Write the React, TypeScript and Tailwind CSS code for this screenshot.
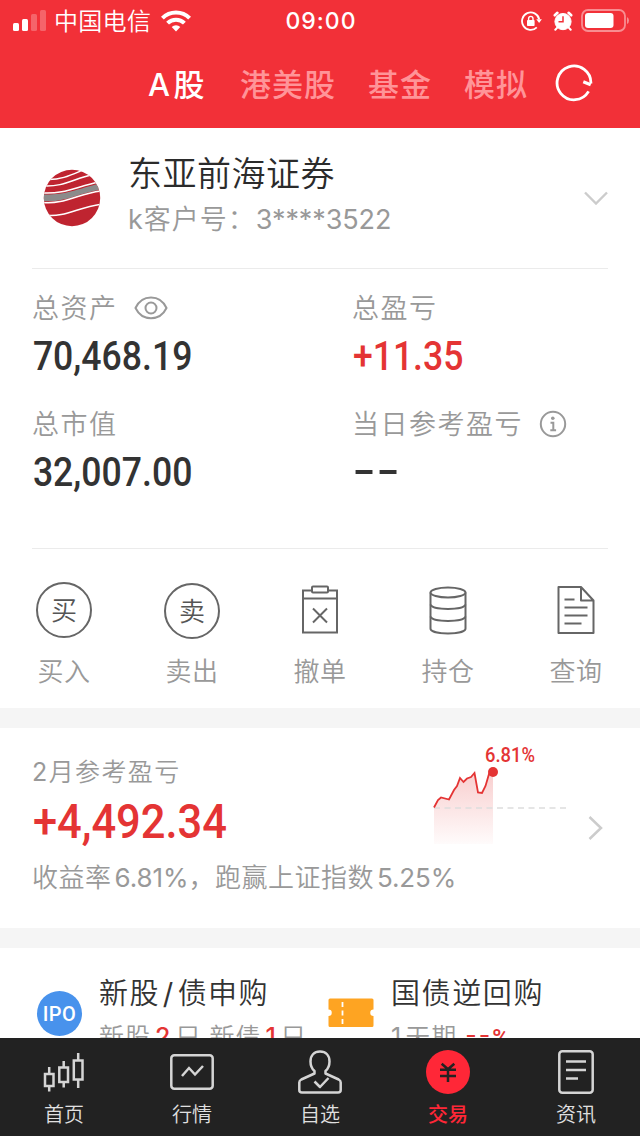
import React from 'react';

const tabs = ['A股', '港美股', '基金', '模拟'];

const StatusBar: React.FC = () => (
  <div className="grid h-10 grid-cols-[1fr_auto_1fr] items-center pl-[13px] pr-[11px]">
    <div className="flex items-center">
      <svg width="33" height="22" viewBox="0 0 33 22" fill="#fff">
        <rect x="0" y="13" width="6" height="8" rx="1.5" />
        <rect x="9" y="9" width="6" height="12" rx="1.5" />
        <rect x="18" y="4" width="6" height="17" rx="1.5" opacity=".25" />
        <rect x="27" y="0" width="6" height="21" rx="1.5" opacity=".25" />
      </svg>
      <span className="ml-2 pt-[2px] text-[24px] font-[350] leading-[38px] tracking-[0.3px]">中国电信</span>
      <svg className="ml-[10px]" width="30" height="22" viewBox="0 0 30 22" fill="none" stroke="#fff" strokeWidth="4">
        <path d="M1.4 8.2a19.2 19.2 0 0 1 27.2 0" />
        <path d="M6.6 13.2a11.9 11.9 0 0 1 16.8 0" />
        <path d="M15 21.5l-4.3-4.4a6.1 6.1 0 0 1 8.6 0z" fill="#fff" stroke="none" />
      </svg>
    </div>
    <span className="text-[23px] font-medium leading-[42px] tracking-[1px]">09:00</span>
    <div className="flex items-center justify-end">
      <svg width="21" height="20" viewBox="0 0 21 20" fill="none" stroke="#fff" strokeWidth="1.8">
        <path d="M18.2 8.2A8.7 8.7 0 1 0 15.8 16.4" />
        <path d="M15.3 8.2h5.6l-2.8 3.7z" fill="#fff" stroke="none" />
        <rect x="6" y="9" width="7.6" height="6" rx=".8" fill="#fff" stroke="none" />
        <path d="M7.6 9.5V7.6a2.2 2.2 0 0 1 4.4 0v1.9" strokeWidth="1.4" />
      </svg>
      <svg className="ml-[11px]" width="20" height="20" viewBox="0 0 20 20" fill="none" stroke="#fff">
        <circle cx="10" cy="10.6" r="8.1" fill="#fff" />
        <path d="M1.8 4.3l2.6-2.5M18.2 4.3l-2.6-2.5" strokeWidth="2.6" strokeLinecap="round" />
        <path d="M4.5 16.4l-2.2 2.4M15.5 16.4l2.2 2.4" strokeWidth="2" strokeLinecap="round" />
        <path d="M10 5.2v5.6H5.5" stroke="#f23038" strokeWidth="1.5" />
      </svg>
      <svg className="mb-[2px] ml-[8px]" width="48" height="23" viewBox="0 0 48 23">
        <rect x="1" y="1" width="43" height="21" rx="6" fill="none" stroke="#fff" strokeWidth="1.8" opacity=".45" />
        <rect x="4" y="4" width="28.5" height="15" rx="3" fill="#fff" />
        <path d="M46 8v7q2-1 2-3.5T46 8z" fill="#fff" opacity=".45" />
      </svg>
    </div>
  </div>
);

const Header: React.FC = () => (
  <header className="h-32 bg-[#f23038] text-white">
    <StatusBar />
    <nav className="flex h-[88px] items-center gap-8 pl-[148px]">
      {tabs.map((tab, i) => (
        <span
          key={tab}
          className={`pt-[2px] text-[31px] font-medium leading-[84px] ${i === 0 ? 'w-[60px] tracking-[3.5px] text-white' : 'tracking-[1px] text-[#ff9498]'}`}
        >
          {tab}
        </span>
      ))}
      <svg className="-ml-[6px] mb-[2px]" width="40" height="40" viewBox="0 0 40 40" fill="none" stroke="#fff" strokeWidth="2.8">
        <path d="M34.6 28.4A16.9 16.9 0 1 1 36.9 20.5" />
        <path d="M29.3 18.8l7.4 2.9" strokeWidth="3.2" />
      </svg>
    </nav>
  </header>
);

const BrokerLogo: React.FC = () => (
  <svg width="58" height="58" viewBox="0 0 58 58">
    <clipPath id="globe">
      <circle cx="29" cy="29" r="28.2" />
    </clipPath>
    <g clipPath="url(#globe)">
      <rect width="58" height="58" fill="#bf2430" />
      <path d="M0 25.5C22 26 32 21 58 14V20.5C36 24 22 34 0 32z" fill="#8b8b8b" />
      <g fill="none" stroke="#fff" strokeWidth="1.5">
        <path d="M4 10.5C18 11 28 6 40 1" />
        <path d="M1 17C20 18 30 10 50 5.5" />
        <path d="M0 24C22 25 32 18 58 12.5" />
        <path d="M0 33.5C22 35.5 34 25 58 22" />
        <path d="M0 46C24 49 34 38 60 35" />
      </g>
    </g>
  </svg>
);

const Account: React.FC = () => (
  <section className="mx-8 flex h-[141px] items-center border-b border-[#ebebeb]">
    <div className="ml-[11px]">
      <BrokerLogo />
    </div>
    <div className="ml-[27px] flex-1 pb-[5px]">
      <h1 className="text-[34px] font-[350] leading-[48px] tracking-[0.5px] text-[#2b2b2b]">东亚前海证券</h1>
      <p className="text-[27px] font-[350] leading-[44px] tracking-[1px] text-[#999]">
        <span className="font-normal">k</span>客户号：<span className="font-normal tracking-[-0.1px]">3****3522</span>
      </p>
    </div>
    <svg width="24" height="14" viewBox="0 0 24 14" fill="none" stroke="#ccc" strokeWidth="2.4">
      <path d="M1 1.5l11 11 11-11" />
    </svg>
  </section>
);

const EyeIcon = (
  <svg width="34" height="26" viewBox="0 0 34 26" fill="none" stroke="#999" strokeWidth="2">
    <path d="M1.5 13C8-1 26-1 32.5 13 26 26.5 8 26.5 1.5 13z" />
    <circle cx="17" cy="13" r="5.5" />
  </svg>
);

const InfoIcon = (
  <svg width="28" height="28" viewBox="0 0 28 28" fill="none" stroke="#999" strokeWidth="2">
    <circle cx="14" cy="14" r="12.2" />
    <path d="M11.5 12.8H14.3V20M11.3 20.2h5.8" />
    <circle cx="13.8" cy="8.3" r="1.8" fill="#999" stroke="none" />
  </svg>
);

const stats = [
  { label: '总资产', value: '70,468.19', color: 'text-[#333]', icon: EyeIcon },
  { label: '总盈亏', value: '+11.35', color: 'text-[#e43434]' },
  { label: '总市值', value: '32,007.00', color: 'text-[#333]' },
  { label: '当日参考盈亏', value: '--', color: 'text-[#333]', icon: InfoIcon },
];

const Assets: React.FC = () => (
  <section className="mx-8 grid h-[280px] grid-cols-[320px_1fr] content-start gap-y-5 border-b border-[#ebebeb] pt-[19px]">
    {stats.map(({ label, value, color, icon }) => (
      <div key={label}>
        <div className="flex h-10 items-center gap-4 text-[27px] font-[350] leading-[38px] tracking-[1.5px] text-[#999]">
          <span className="pt-[2px]">{label}</span>
          {icon}
        </div>
        <div className={`h-14 origin-left scale-x-[0.89] pl-px font-[Roboto] text-[40px] font-medium leading-[58px] ${color}`}>
          {value === '--' ? (
            <div className="flex h-14 items-center gap-2 pl-[3px]">
              <span className="h-[3.5px] w-[19px] bg-[#333]" />
              <span className="h-[3.5px] w-[19px] bg-[#333]" />
            </div>
          ) : (
            value
          )}
        </div>
      </div>
    ))}
  </section>
);

const actions = [
  {
    label: '买入',
    icon: <span className="flex size-14 items-center justify-center rounded-full border-2 border-[#666] text-[26px] font-[350] text-[#555]">买</span>,
  },
  {
    label: '卖出',
    icon: <span className="mt-0.5 flex size-14 items-center justify-center rounded-full border-2 border-[#666] text-[26px] font-[350] text-[#555]">卖</span>,
  },
  {
    label: '撤单',
    icon: (
      <svg width="38" height="50" viewBox="0 0 38 50" fill="none" stroke="#666" strokeWidth="2">
        <path d="M11 5.5H2v42h34v-42h-9M2 13.5h34" />
        <rect x="11" y="1.5" width="16" height="6" rx="1" />
        <path d="M12 23.5l14 14M26 23.5l-14 14" />
      </svg>
    ),
  },
  {
    label: '持仓',
    icon: (
      <svg width="38" height="50" viewBox="0 0 38 50" fill="none" stroke="#666" strokeWidth="2">
        <ellipse cx="19" cy="7.5" rx="17.5" ry="5" />
        <path d="M1.5 7.5v36c0 6.5 35 6.5 35 0v-36" />
        <path d="M1.5 19.5c2 6 33 6 35 0M1.5 31.5c2 6 33 6 35 0" />
      </svg>
    ),
  },
  {
    label: '查询',
    icon: (
      <svg width="38" height="50" viewBox="0 0 38 50" fill="none" stroke="#666" strokeWidth="2">
        <path d="M24 2H1.5v46h35V15.5zM24 2v13.5h12.5" strokeLinejoin="round" />
        <path d="M7.5 14.5h10M7.5 22.5h23M7.5 30.5h23M7.5 38.5h17" />
      </svg>
    ),
  },
];

const Actions: React.FC = () => (
  <section className="grid h-[159px] grid-cols-5 pt-8">
    {actions.map(({ label, icon }) => (
      <div key={label} className="flex flex-col items-center">
        <div className="flex h-[58px] items-center">{icon}</div>
        <span className="mt-[13px] text-[26px] font-[350] leading-10 tracking-[0.5px] text-[#999]">{label}</span>
      </div>
    ))}
  </section>
);

const ProfitChart: React.FC = () => (
  <svg width="140" height="104" viewBox="432 743 140 104" fill="none">
    <linearGradient id="fade" x1="0" y1="0" x2="0" y2="1">
      <stop offset="0" stopColor="#e43434" stopOpacity=".24" />
      <stop offset="1" stopColor="#e43434" stopOpacity=".02" />
    </linearGradient>
    <path d="M434 807L438 800L441 797.5L449 799.5L454 790L457 786L460 778L463.5 782L467 778.5L471 777L474.5 773L478 792.5L482 793L485.5 786L489 774L493 772V844H434z" fill="url(#fade)" />
    <path d="M434 808H569" stroke="#ddd" strokeWidth="1.6" strokeDasharray="6 4.5" />
    <path d="M434 807.5L438 800L441 797.5L449 799.5L454 790L457 786L460 778L463.5 782L467 778.5L471 777L474.5 773L478 792.5L482 793L485.5 786L489 774L493 772" stroke="#e43434" strokeWidth="1.8" />
    <circle cx="493" cy="772" r="5" fill="#e43434" />
    <text x="485" y="762" fill="#e43434" fontSize="20" fontWeight="500" fontFamily="Roboto" textLength="50" lengthAdjust="spacingAndGlyphs">6.81%</text>
  </svg>
);

const MonthlyProfit: React.FC = () => (
  <section className="flex h-[200px] justify-between pl-8 pr-[37px]">
    <div className="pt-6">
      <p className="text-[25px] font-[350] leading-10 tracking-[1.4px] text-[#999]">
        <span className="font-normal">2</span>月参考盈亏
      </p>
      <p className="h-[60px] w-[200px] origin-left scale-x-[0.905] pl-px font-[Roboto] text-[48px] font-medium leading-[60px] text-[#e43434]">+4,492.34</p>
      <p className="w-[430px] whitespace-nowrap text-[26px] font-[350] leading-[51px] tracking-[0.5px] text-[#999]">
        收益率<span className="ml-[3px] font-normal tracking-[-0.1px]">6.81%</span>，跑赢上证指数<span className="ml-[3px] font-normal tracking-[-0.1px]">5.25%</span>
      </p>
    </div>
    <div className="-ml-[40px] flex items-start gap-4 pt-[15px]">
      <ProfitChart />
      <svg className="mt-[73px]" width="15" height="24" viewBox="0 0 15 24" fill="none" stroke="#ccc" strokeWidth="2.5">
        <path d="M1.5 1l11.5 11-11.5 11" />
      </svg>
    </div>
  </section>
);

const Promos: React.FC = () => (
  <section className="flex h-[90px] overflow-hidden pl-[37px] pt-[21px]">
    <div className="mt-[22px] flex size-[45px] shrink-0 items-center justify-center rounded-full bg-[#4892ec] font-[Roboto] text-[20px] font-medium tracking-[0.5px] text-white">
      IPO
    </div>
    <div className="ml-[17px] w-[229px] shrink-0 whitespace-nowrap">
      <p className="text-[29px] font-[350] leading-[50px] tracking-[1.4px] text-[#333]">
        新股<span className="px-[3px] font-normal">/</span>债申购
      </p>
      <p className="text-[25px] font-[350] leading-[36px] tracking-[1px] text-[#999]">
        新股<b className="px-1 font-medium text-[#e43434]">2</b>只 新债<b className="px-1 font-medium text-[#e43434]">1</b>只
      </p>
    </div>
    <svg className="mt-[29px] shrink-0" width="46" height="30" viewBox="0 0 46 30">
      <path d="M2 .5H44q1.5 0 1.5 1.5v9.5a3 3 0 0 0 0 6.5v9.5q0 1.5-1.5 1.5H2Q.5 29 .5 27.5V18a3 3 0 0 0 0-6.5V2Q.5.5 2 .5z" fill="#fea422" />
      <path d="M14.5 4v24" stroke="#fff" strokeWidth="1.8" strokeDasharray="5 3.5" />
    </svg>
    <div className="ml-[17px] shrink-0 whitespace-nowrap">
      <p className="text-[29px] font-[350] leading-[50px] tracking-[1.6px] text-[#333]">国债逆回购</p>
      <p className="text-[25px] font-[350] leading-[36px] tracking-[1px] text-[#999]">
        <span className="mr-[3px] font-normal">1</span>天期
        <span className="ml-2 font-normal text-[#e43434]">
          <span className="align-[2px] leading-none tracking-[2px]">--</span>
          <span className="font-[Roboto] text-[23px] font-medium">%</span>
        </span>
      </p>
    </div>
  </section>
);

const navItems = [
  {
    label: '首页',
    icon: (
      <g>
        <rect x="3" y="24" width="8.5" height="12" />
        <path d="M7.2 17v7M7.2 36v5.5" />
        <rect x="17.3" y="17.5" width="8.7" height="14.5" />
        <path d="M21.7 11v6.5M21.7 32v5.5" />
        <rect x="31.8" y="10.5" width="8.7" height="19" />
        <path d="M36.2 3v7.5M36.2 29.5v8.5" />
      </g>
    ),
  },
  {
    label: '行情',
    icon: (
      <g>
        <rect x="1.3" y="5.3" width="41.4" height="33.4" rx="3" />
        <path d="M12 26l7-8 6 6.5 8-8.5" />
      </g>
    ),
  },
  {
    label: '自选',
    icon: (
      <g strokeLinejoin="round">
        <path d="M22 1.5c-6 0-9.5 4-9.5 10 0 4 1 7 4 9.5v2.5L3.3 29.5Q1.3 30.5 1.3 32.5v7.5Q1.3 42.5 4 42.5H40q2.7 0 2.7-2.5v-7.5q0-2-2-3L27.5 23.5V21c3-2.5 4-5.5 4-9.5 0-6-3.5-10-9.5-10z" />
        <path d="M16.5 31.5l5.5 5.5 8.5-9" />
      </g>
    ),
  },
  {
    label: '交易',
    active: true,
    icon: (
      <g>
        <circle cx="22" cy="22" r="22" fill="#ff2737" stroke="none" />
        <path d="M15.7 13.8l6.3 5.5 6.3-5.5M14 19.7h16M14 26h16M22 19.5V32" stroke="#222" strokeWidth="2.5" />
      </g>
    ),
  },
  {
    label: '资讯',
    icon: (
      <g>
        <rect x="5.3" y="1.3" width="33.4" height="41.4" rx="3" />
        <path d="M12 11.5h20M12 20h20M12 28.5h12" />
      </g>
    ),
  },
];

const BottomNav: React.FC = () => (
  <nav className="grid h-[98px] grid-cols-5 bg-[#222] pt-3">
    {navItems.map(({ label, icon, active }) => (
      <div key={label} className="flex flex-col items-center">
        <svg width="44" height="44" viewBox="0 0 44 44" fill="none" stroke="#d5d5d5" strokeWidth="2.5">
          {icon}
        </svg>
        <span className={`mt-[6px] text-[20px] leading-[30px] ${active ? 'font-medium text-[#ff2737]' : 'font-[350] text-[#e0e0e0]'}`}>{label}</span>
      </div>
    ))}
  </nav>
);

const App: React.FC = () => (
  <div className="flex h-[1136px] w-[640px] flex-col overflow-hidden bg-white font-[Inter,'Noto_Sans_CJK_SC',sans-serif]">
    <Header />
    <Account />
    <Assets />
    <Actions />
    <div className="h-5 bg-[#f5f5f5]" />
    <MonthlyProfit />
    <div className="h-5 bg-[#f5f5f5]" />
    <Promos />
    <BottomNav />
  </div>
);

export default App;
